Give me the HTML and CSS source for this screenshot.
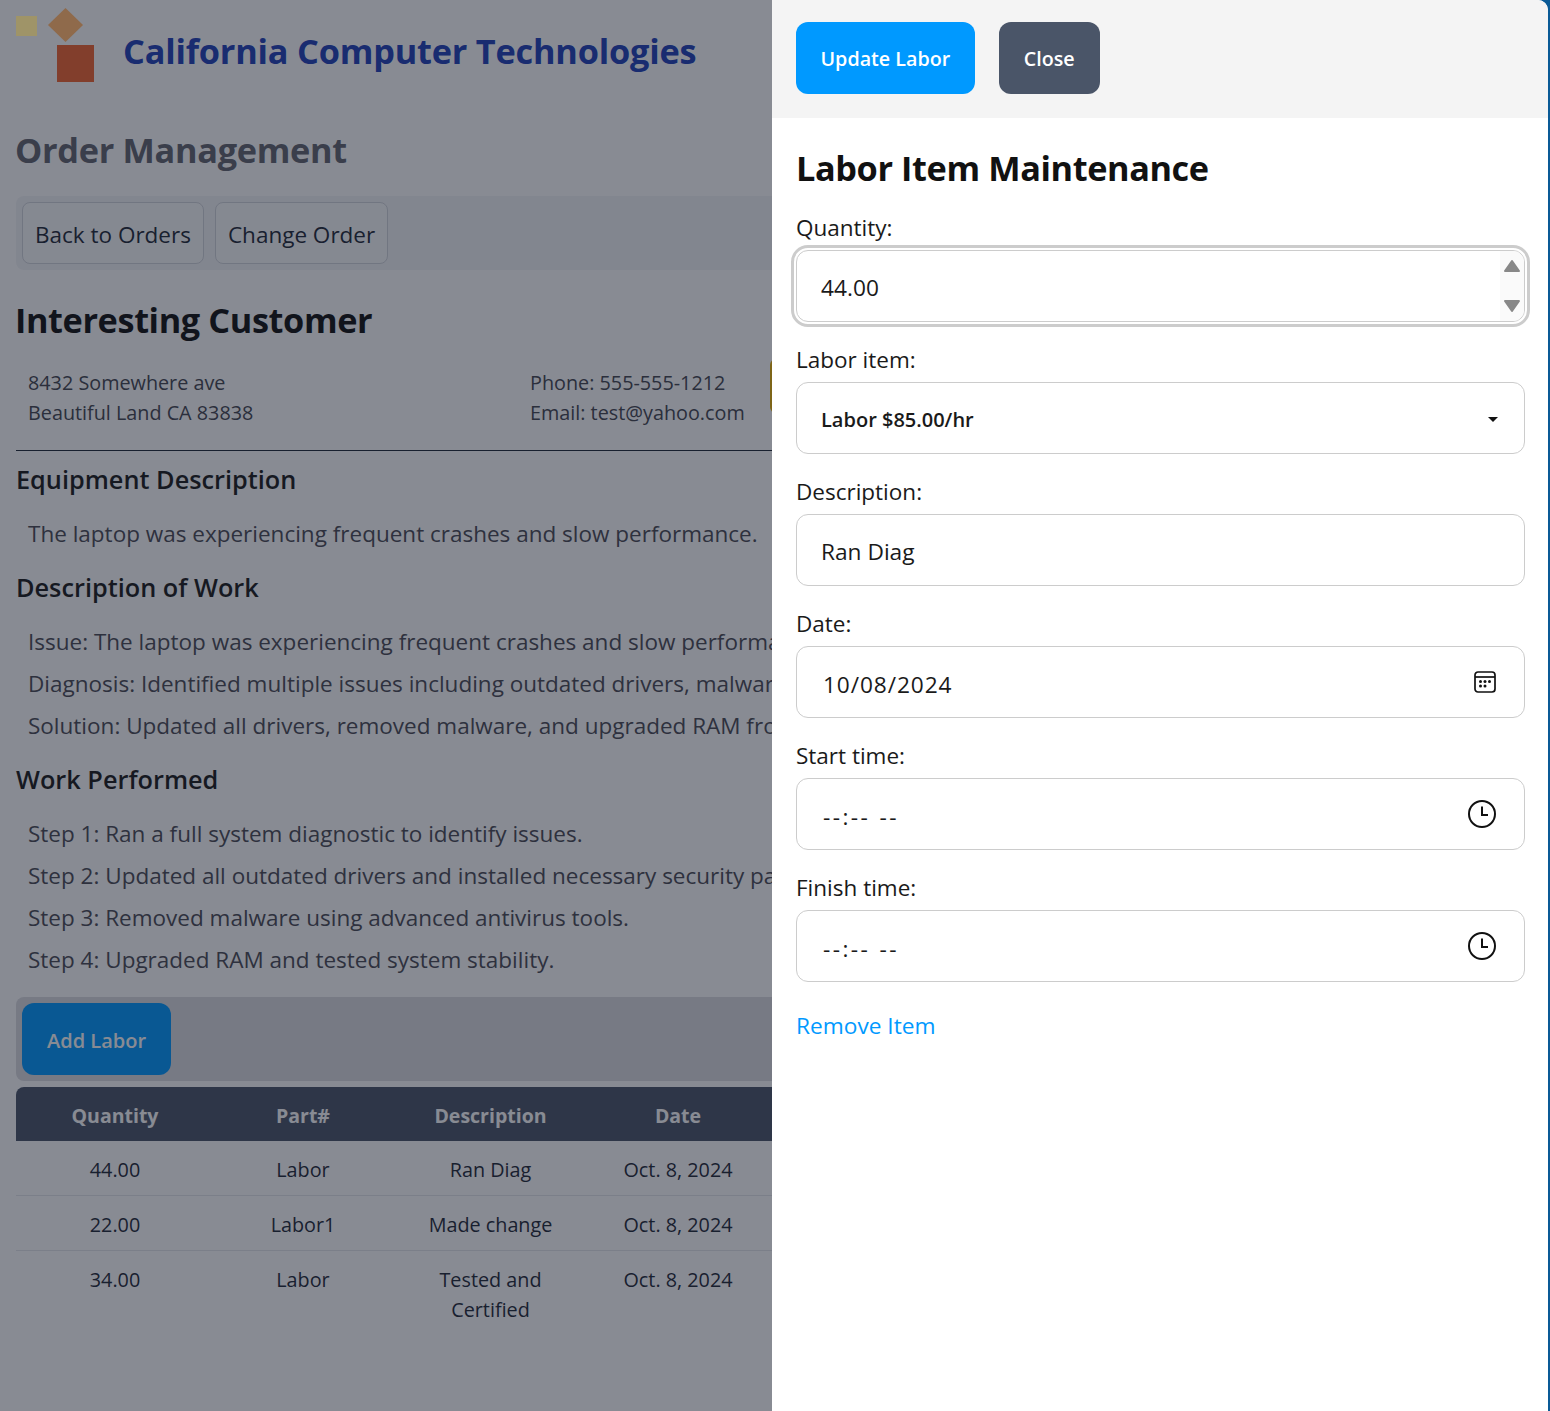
FILE: index.html
```html
<!DOCTYPE html>
<html lang="en">
<head>
<meta charset="UTF-8">
<meta name="viewport" content="width=device-width, initial-scale=1.0">
<title>Labor Item Maintenance</title>
<link rel="stylesheet" href="styles.css">
</head>
<body>

<div class="page">
    <header class="brand">
        <svg class="logo" width="78" height="74" viewBox="0 0 78 74">
            <rect x="0" y="8" width="21" height="20" fill="#9f9468"/>
            <polygon points="32,17 49.5,0 67,17 49.5,34" fill="#8f6a4b"/>
            <rect x="41" y="37" width="37" height="37" fill="#823e2c"/>
        </svg>
        <div class="brand-name">California Computer Technologies</div>
    </header>

    <h2 class="page-title">Order Management</h2>

    <div class="toolbar">
        <button class="tool-btn">Back to Orders</button>
        <button class="tool-btn">Change Order</button>
    </div>

    <h2 class="customer">Interesting Customer</h2>
    <div class="contact">
        <div class="contact-col">
            <div>8432 Somewhere ave</div>
            <div>Beautiful Land CA 83838</div>
        </div>
        <div class="contact-col">
            <div>Phone: 555-555-1212</div>
            <div>Email: test@yahoo.com</div>
        </div>
        <div class="status-btn"></div>
    </div>

    <h3 class="section first">Equipment Description</h3>
    <p class="line">The laptop was experiencing frequent crashes and slow performance.</p>

    <h3 class="section">Description of Work</h3>
    <p class="line">Issue: The laptop was experiencing frequent crashes and slow performa</p>
    <p class="line">Diagnosis: Identified multiple issues including outdated drivers, malwar</p>
    <p class="line">Solution: Updated all drivers, removed malware, and upgraded RAM fro</p>

    <h3 class="section">Work Performed</h3>
    <p class="line">Step 1: Ran a full system diagnostic to identify issues.</p>
    <p class="line">Step 2: Updated all outdated drivers and installed necessary security pa</p>
    <p class="line">Step 3: Removed malware using advanced antivirus tools.</p>
    <p class="line">Step 4: Upgraded RAM and tested system stability.</p>

    <div class="labor-bar">
        <button class="add-btn">Add Labor</button>
    </div>

    <table class="labor-table">
        <colgroup>
            <col class="col-a"><col class="col-b"><col class="col-c"><col class="col-b"><col>
        </colgroup>
        <thead>
            <tr>
                <th>Quantity</th>
                <th>Part#</th>
                <th>Description</th>
                <th>Date</th>
                <th></th>
            </tr>
        </thead>
        <tbody>
            <tr>
                <td>44.00</td>
                <td>Labor</td>
                <td>Ran Diag</td>
                <td>Oct. 8, 2024</td>
                <td></td>
            </tr>
            <tr>
                <td>22.00</td>
                <td>Labor1</td>
                <td>Made change</td>
                <td>Oct. 8, 2024</td>
                <td></td>
            </tr>
            <tr>
                <td>34.00</td>
                <td>Labor</td>
                <td>Tested and Certified</td>
                <td>Oct. 8, 2024</td>
                <td></td>
            </tr>
        </tbody>
    </table>
</div>

<div class="overlay"></div>

<aside class="drawer">
    <div class="drawer-panel">
        <div class="drawer-top">
            <button class="btn btn-primary">Update Labor</button>
            <button class="btn btn-dark">Close</button>
        </div>
        <form class="drawer-body">
            <h2 class="drawer-title">Labor Item Maintenance</h2>

            <label class="field-label">Quantity:</label>
            <div class="field focused">
                <input class="input" type="text" value="44.00">
                <div class="spinner">
                    <svg width="18" height="14" viewBox="0 0 18 14"><path d="M9 2 16 12H2Z" fill="#888" stroke="#888" stroke-width="2" stroke-linejoin="round"/></svg>
                    <svg width="18" height="14" viewBox="0 0 18 14"><path d="M9 12 16 2H2Z" fill="#888" stroke="#888" stroke-width="2" stroke-linejoin="round"/></svg>
                </div>
            </div>

            <label class="field-label">Labor item:</label>
            <div class="field">
                <div class="input select-box">Labor $85.00/hr</div>
                <span class="caret"></span>
            </div>

            <label class="field-label">Description:</label>
            <div class="field">
                <input class="input" type="text" value="Ran Diag">
            </div>

            <label class="field-label">Date:</label>
            <div class="field">
                <div class="input input-date">10/08/2024</div>
                <svg class="field-icon" width="22" height="22" viewBox="0 0 22 22" fill="none" stroke="#111" stroke-width="1.7">
                    <rect x="1" y="1" width="20" height="20" rx="3"/>
                    <path d="M1 6h20"/>
                    <g fill="#111" stroke="none">
                        <circle cx="6.5" cy="10.5" r="1.5"/>
                        <circle cx="11" cy="10.5" r="1.5"/>
                        <circle cx="15.5" cy="10.5" r="1.5"/>
                        <circle cx="6.5" cy="15" r="1.5"/>
                        <circle cx="11" cy="15" r="1.5"/>
                    </g>
                </svg>
            </div>

            <label class="field-label">Start time:</label>
            <div class="field">
                <div class="input input-time">--:-- --</div>
                <svg class="field-icon" width="28" height="28" viewBox="0 0 28 28" fill="none" stroke="#111" stroke-width="2">
                    <circle cx="14" cy="14" r="13"/>
                    <path d="M14 6.5v8.5h6"/>
                </svg>
            </div>

            <label class="field-label">Finish time:</label>
            <div class="field">
                <div class="input input-time">--:-- --</div>
                <svg class="field-icon" width="28" height="28" viewBox="0 0 28 28" fill="none" stroke="#111" stroke-width="2">
                    <circle cx="14" cy="14" r="13"/>
                    <path d="M14 6.5v8.5h6"/>
                </svg>
            </div>

            <a class="remove-link" href="#">Remove Item</a>
        </form>
    </div>
</aside>

</body>
</html>
```

FILE: styles.css
```css
* {
    margin: 0;
    padding: 0;
    box-sizing: border-box;
}

html, body {
    height: 1411px;
    overflow: hidden;
}

body {
    font-family: "Open Sans", "Noto Sans", Arial, sans-serif;
    background: #fff;
    color: #1f2937;
    position: relative;
}

.page {
    padding: 8px 16px 0;
    width: 1550px;
}

.brand {
    display: flex;
    align-items: center;
    height: 74px;
    gap: 29px;
}

.logo {
    position: relative;
    z-index: 1;
}

.brand-name {
    font-size: 34.3px;
    font-weight: 700;
    color: #2040b8;
    letter-spacing: -0.2px;
    position: relative;
    top: 5px;
}

.page-title {
    font-size: 34.3px;
    font-weight: 700;
    line-height: 48px;
    margin-top: 44px;
    margin-left: -1px;
    color: #63646e;
    letter-spacing: -0.3px;
}

.toolbar {
    display: flex;
    gap: 11px;
    margin-top: 22px;
    padding: 6px;
    height: 74px;
    background: #f3f4f6;
    border-radius: 8px;
}

.tool-btn {
    height: 62px;
    padding: 2px 12px 0;
    font: inherit;
    font-size: 22.5px;
    color: #1f2937;
    background: #f9fafb;
    border: 1px solid #d1d5db;
    border-radius: 8px;
}

.customer {
    font-size: 34.3px;
    font-weight: 700;
    line-height: 48px;
    margin-top: 26px;
    margin-left: -1px;
    color: #111;
    letter-spacing: -0.4px;
}

.contact {
    display: flex;
    position: relative;
    margin-top: 24px;
    padding: 0 12px 22px;
    border-bottom: 1px solid #1f2937;
    font-size: 19.8px;
    line-height: 30px;
    color: #444650;
}

.contact-col {
    width: 502px;
}

.status-btn {
    position: absolute;
    left: 754px;
    top: -9px;
    width: 40px;
    height: 54px;
    background: #eab308;
    border-radius: 6px;
}

.section {
    font-size: 25.3px;
    font-weight: 600;
    line-height: 40px;
    margin-top: 12px;
    color: #1a1a1a;
}

.section.first {
    margin-top: 8px;
}

.line {
    font-size: 22.5px;
    line-height: 42px;
    padding-left: 12px;
    color: #4b4b55;
    white-space: nowrap;
}

.section + .line {
    margin-top: 14px;
}

.labor-bar {
    margin-top: 16px;
    padding: 6px;
    height: 84px;
    background: #dcdce0;
    border-radius: 8px;
}

.add-btn {
    width: 149px;
    height: 72px;
    padding-top: 2px;
    font: inherit;
    font-size: 20px;
    font-weight: 600;
    color: #fff;
    background: #0099ff;
    border: none;
    border-radius: 12px;
}

.labor-table {
    width: 100%;
    margin-top: 6px;
    border-collapse: separate;
    border-spacing: 0;
    table-layout: fixed;
    font-size: 19.8px;
    text-align: center;
}

.col-a {
    width: 198px;
}

.col-b {
    width: 178px;
}

.col-c {
    width: 197px;
}

.labor-table th {
    height: 54px;
    padding-top: 2px;
    background: #4a5568;
    color: #fff;
    font-size: 19.5px;
    font-weight: 700;
}

.labor-table th:first-child {
    border-top-left-radius: 8px;
}

.labor-table td {
    height: 55px;
    padding: 14px 16px 10px;
    line-height: 30px;
    border-bottom: 1px solid #e5e7eb;
    color: #1f2937;
    vertical-align: top;
}

.labor-table tr:last-child td {
    border-bottom: none;
}

.overlay {
    position: absolute;
    inset: 0;
    background: rgba(17, 24, 39, 0.5);
}

.drawer {
    position: absolute;
    top: 0;
    bottom: 0;
    left: 772px;
    right: 0;
    background: #0a5a96;
    z-index: 2;
}

.drawer-panel {
    height: 100%;
    margin-right: 2px;
    background: #fff;
    border-top-right-radius: 10px;
    overflow: hidden;
}

.drawer-top {
    display: flex;
    gap: 24px;
    height: 118px;
    padding: 22px 24px;
    background: #f4f4f4;
}

.btn {
    height: 72px;
    padding: 0 25px;
    font: inherit;
    font-size: 19.7px;
    font-weight: 600;
    color: #fff;
    border: none;
    border-radius: 12px;
}

.btn-primary {
    padding: 0 24.5px;
    background: #0099ff;
}

.btn-dark {
    background: #4a5568;
}

.drawer-body {
    display: block;
    padding: 26px 24px 0;
}

.drawer-title {
    font-size: 34.3px;
    font-weight: 700;
    line-height: 48px;
    color: #111;
    letter-spacing: -0.4px;
}

.field-label {
    display: block;
    font-size: 22.5px;
    line-height: 32px;
    color: #1a1a1a;
    margin-top: 22px;
    margin-bottom: 6px;
}

.drawer-title + .field-label {
    margin-top: 20px;
}

.field {
    position: relative;
    width: 729px;
    height: 72px;
}

.field.focused {
    outline: 3px solid #ccc;
    outline-offset: 2px;
    border-radius: 12px;
}

.input {
    display: flex;
    align-items: center;
    width: 100%;
    height: 72px;
    padding: 2px 24px 0;
    font: inherit;
    font-size: 22.7px;
    color: #1a1a1a;
    background: #fff;
    border: 1px solid #ccc;
    border-radius: 12px;
    outline: none;
}

.input-date {
    padding: 4px 26px 0;
    letter-spacing: 0.9px;
}

.input-time {
    padding: 4px 26px 0;
    letter-spacing: 2.4px;
    word-spacing: 1px;
}

.select-box {
    font-size: 20px;
    font-weight: 600;
}

.caret {
    position: absolute;
    right: 27px;
    top: 35px;
    border-left: 5px solid transparent;
    border-right: 5px solid transparent;
    border-top: 5px solid #111;
}

.spinner {
    position: absolute;
    top: 1px;
    right: 1px;
    bottom: 1px;
    width: 24px;
    background: #fafafa;
    border-radius: 0 11px 11px 0;
    display: flex;
    flex-direction: column;
    justify-content: space-between;
    align-items: center;
    padding: 8px 0;
}

.field-icon {
    position: absolute;
    right: 29px;
    top: 50%;
    transform: translateY(-50%);
}

.remove-link {
    display: block;
    margin-top: 27px;
    font-size: 22.7px;
    line-height: 34px;
    color: #0099ff;
    text-decoration: none;
}
```
